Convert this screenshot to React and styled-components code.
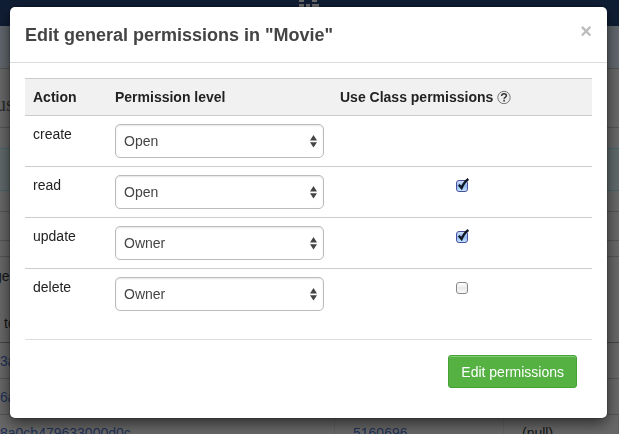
import React, { useState } from "react";
import styled, { createGlobalStyle } from "styled-components";

const GlobalStyle = createGlobalStyle`
  * { box-sizing: border-box; }
  html, body, #root { height: 100%; }
  body {
    margin: 0;
    overflow: hidden;
    background: #696969;
    font-family: "Liberation Sans", Arial, Helvetica, sans-serif;
    font-size: 14px;
    line-height: 20px;
    color: #222;
  }
`;

/* Dimmed page behind the dialog */

const Page = styled.div`
  height: 100%;
  overflow: hidden;
  color: #151515;
`;

const TopBar = styled.header`
  height: 26px;
  background: #101e35;
  display: flex;
  justify-content: center;
  align-items: flex-start;
`;

const Band = styled.div`
  height: ${(p) => p.$height}px;
  background: ${(p) => p.$fill || "transparent"};
  border-bottom: 1px solid ${(p) => p.$line || "#555"};
  display: flex;
  align-items: center;
  overflow: hidden;
`;

const PageTitle = styled.span`
  font-family: "Liberation Serif", "Times New Roman", serif;
  font-size: 20px;
  line-height: 24px;
  color: #2b2b2b;
  margin-top: 12px;
  text-indent: -4px;
`;

const Notes = styled.div`
  height: 86px;
  border-bottom: 1px solid #444;
  padding: 9px 0;
  display: grid;
  gap: 26px;
  overflow: hidden;
`;

const Note = styled.span`
  text-indent: ${(p) => (p.$indent ? 4 : -6)}px;
`;

const Record = styled.div`
  height: 36px;
  border-bottom: 1px solid #555;
  display: grid;
  grid-template-columns: 335px 169px 1fr;
  align-items: center;
`;

const Cell = styled.span`
  height: 100%;
  display: flex;
  align-items: center;
  padding-top: 1px;
  padding-left: ${(p) => (p.$first ? 0 : 18)}px;
  border-right: 1px solid #616161;
  color: ${(p) => (p.$plain ? "#151515" : "#1e3157")};
`;

/* Dialog */

const Overlay = styled.div`
  position: fixed;
  inset: 0;
  padding: 7px 12px 16px 10px;
`;

const Dialog = styled.section`
  background: #fff;
  border-radius: 5px;
  box-shadow: 0 5px 15px rgba(0, 0, 0, 0.6), 0 0 2px rgba(0, 0, 0, 0.5);
`;

const DialogHeader = styled.header`
  display: flex;
  justify-content: space-between;
  align-items: flex-start;
  padding: 15px 15px 14px;
  border-bottom: 1px solid #ddd;
`;

const Title = styled.h2`
  margin: 0;
  font-size: 18px;
  line-height: 26px;
  font-weight: bold;
  color: #444;
`;

const CloseButton = styled.button`
  border: 0;
  padding: 0;
  background: none;
  font: bold 20px/18px "Liberation Sans", Arial, sans-serif;
  color: #bbb;
  cursor: pointer;
`;

const DialogBody = styled.div`
  padding: 15px 15px 20px;
`;

const Table = styled.table`
  width: 100%;
  border-collapse: collapse;
  table-layout: fixed;
`;

const ActionCol = styled.col`
  width: 82px;
`;

const LevelCol = styled.col`
  width: 225px;
`;

const HeadRow = styled.tr`
  height: 37px;
  background: #f1f1f1;
  border-top: 1px solid #ccc;
`;

const HeadCell = styled.th`
  padding: 8px;
  text-align: left;
  font-weight: bold;
`;

const BodyRow = styled.tr`
  border-top: 1px solid #ccc;
`;

const BodyCell = styled.td`
  padding: 8px;
  vertical-align: top;
  text-align: ${(p) => (p.$center ? "center" : "left")};
`;

const HeadLabel = styled.span`
  display: flex;
  align-items: center;
  gap: 4px;
`;

const SelectWrap = styled.div`
  position: relative;
  svg {
    position: absolute;
    right: 7px;
    top: 11px;
    pointer-events: none;
  }
`;

const Select = styled.select`
  display: block;
  appearance: none;
  width: 100%;
  height: 34px;
  padding: 0 20px 0 8px;
  border: 1px solid #bbb;
  border-radius: 5px;
  background: #fff;
  box-shadow: inset 0 1px 2px rgba(0, 0, 0, 0.1);
  font: 14px/20px "Liberation Sans", Arial, sans-serif;
  color: #444;
`;

const CheckWrap = styled.span`
  position: relative;
  display: inline-block;
  width: 12px;
  height: 12px;
  margin-top: 5px;
  vertical-align: top;
  svg {
    position: absolute;
    left: 0;
    top: -2px;
    pointer-events: none;
  }
`;

const CheckInput = styled.input`
  appearance: none;
  display: block;
  width: 12px;
  height: 12px;
  margin: 0;
  border: 1px solid #888;
  border-radius: 3px;
  background: linear-gradient(#fff, #e9e9e9 50%, #fafafa);
  &:checked {
    border-color: #4b4d9e;
    background: linear-gradient(#cfe0f8, #8fb9f2 50%, #c4e6ff);
  }
`;

const DialogFooter = styled.footer`
  display: flex;
  justify-content: flex-end;
  margin: 0 15px;
  padding: 15px 15px 30px;
  border-top: 1px solid #ddd;
`;

const SubmitButton = styled.button`
  height: 33px;
  padding: 0 12px;
  border: 1px solid #45a336;
  border-radius: 3px;
  background: #54b142;
  box-shadow: inset 0 1px 0 #86cb79;
  font: 14px/20px "Liberation Sans", Arial, sans-serif;
  color: #fff;
  cursor: pointer;
`;

function GridLogo() {
  return (
    <svg width="22" height="7" viewBox="0 0 22 7" fill="#6d6d6d" aria-hidden="true">
      <path d="M0 0h5v2H0zM13 0h5v2h-5zM0 4h5v3H0zM7 4h4v3H7zM13 4h7v3h-7z" />
    </svg>
  );
}

function HelpIcon() {
  return (
    <svg width="14" height="14" viewBox="0 0 14 14" fill="none" aria-hidden="true">
      <circle cx="7" cy="7.5" r="6.2" fill="#ececec" stroke="#777" />
      <path d="M4.6 6c0-1.4 1-2.2 2.4-2.2s2.4.8 2.4 2c0 1.5-2.3 1.5-2.3 3" stroke="#333" strokeWidth="1.5" />
      <path d="M6.3 9.8h1.6v1.6H6.3z" fill="#333" />
    </svg>
  );
}

function Arrows() {
  return (
    <svg width="7" height="13" viewBox="0 0 7 13" fill="#444" aria-hidden="true">
      <path d="M3.5 0 7 5.4H0zM3.5 12.6 7 7.2H0z" />
    </svg>
  );
}

function Tick() {
  return (
    <svg width="14" height="14" viewBox="0 0 14 14" fill="none" aria-hidden="true">
      <path d="M2.8 6.8 5.6 10C7 6.6 9.2 3.2 12.4 1" stroke="#101826" strokeWidth="2.4" />
    </svg>
  );
}

function PermissionRow({ action, level, useClass }) {
  const [value, setValue] = useState(level);
  const [checked, setChecked] = useState(Boolean(useClass));
  return (
    <BodyRow>
      <BodyCell>
        <label htmlFor={`level-${action}`}>{action}</label>
      </BodyCell>
      <BodyCell>
        <SelectWrap>
          <Select id={`level-${action}`} value={value} onChange={(e) => setValue(e.target.value)}>
            <option>Open</option>
            <option>Owner</option>
          </Select>
          <Arrows />
        </SelectWrap>
      </BodyCell>
      <BodyCell $center>
        {useClass !== undefined && (
          <CheckWrap>
            <CheckInput
              type="checkbox"
              aria-label={`Use Class permissions: ${action}`}
              checked={checked}
              onChange={(e) => setChecked(e.target.checked)}
            />
            {checked && <Tick />}
          </CheckWrap>
        )}
      </BodyCell>
    </BodyRow>
  );
}

const permissions = [
  { action: "create", level: "Open" },
  { action: "read", level: "Open", useClass: true },
  { action: "update", level: "Owner", useClass: true },
  { action: "delete", level: "Owner", useClass: false },
];

export default function App() {
  return (
    <>
      <GlobalStyle />
      <Page aria-hidden="true">
        <TopBar>
          <GridLogo />
        </TopBar>
        <Band $height={43} $fill="#62686e" />
        <Band $height={59}>
          <PageTitle>us</PageTitle>
        </Band>
        <Band $height={21} $line="#48656b" />
        <Band $height={42} $fill="#616a6b" $line="#48656b" />
        <Band $height={21} />
        <Band $height={29} />
        <Band $height={16} />
        <Notes>
          <Note>ge</Note>
          <Note $indent>to</Note>
        </Notes>
        <Record>
          <Cell $first>3a</Cell>
        </Record>
        <Record>
          <Cell $first>6a</Cell>
        </Record>
        <Record>
          <Cell $first>8a0cb479633000d0c</Cell>
          <Cell>5160696</Cell>
          <Cell $plain>(null)</Cell>
        </Record>
      </Page>
      <Overlay>
        <Dialog role="dialog" aria-labelledby="dialog-title">
          <DialogHeader>
            <Title id="dialog-title">Edit general permissions in "Movie"</Title>
            <CloseButton type="button" aria-label="Close">×</CloseButton>
          </DialogHeader>
          <DialogBody>
            <Table>
              <colgroup>
                <ActionCol />
                <LevelCol />
                <col />
              </colgroup>
              <thead>
                <HeadRow>
                  <HeadCell>Action</HeadCell>
                  <HeadCell>Permission level</HeadCell>
                  <HeadCell>
                    <HeadLabel>
                      Use Class permissions <HelpIcon />
                    </HeadLabel>
                  </HeadCell>
                </HeadRow>
              </thead>
              <tbody>
                {permissions.map((p) => (
                  <PermissionRow key={p.action} {...p} />
                ))}
              </tbody>
            </Table>
          </DialogBody>
          <DialogFooter>
            <SubmitButton type="button">Edit permissions</SubmitButton>
          </DialogFooter>
        </Dialog>
      </Overlay>
    </>
  );
}
